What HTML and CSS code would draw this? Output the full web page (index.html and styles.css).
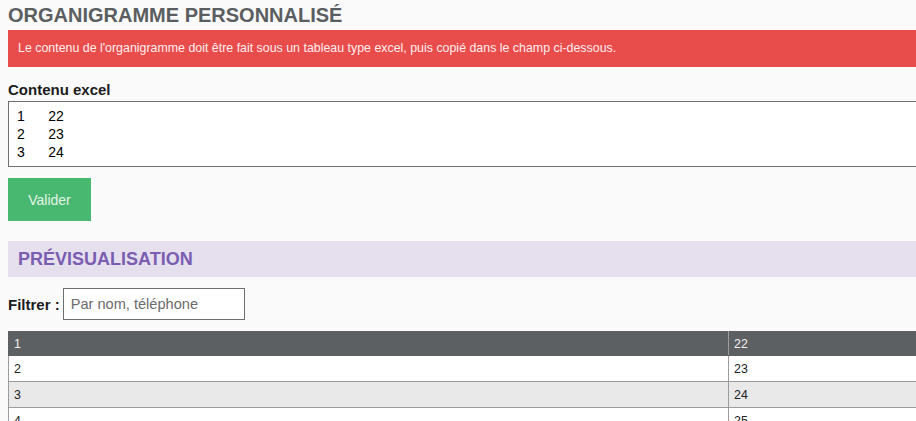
FILE: index.html
```html
<!DOCTYPE html>
<html lang="fr">
<head>
    <meta charset="UTF-8">
    <meta name="viewport" content="width=device-width, initial-scale=1.0">
    <title>Organigramme personnalisé</title>
    <link rel="stylesheet" href="styles.css">
</head>
<body>

    <div class="page">
        <h1 class="page-title">ORGANIGRAMME PERSONNALISÉ</h1>
        <div class="alert">Le contenu de l'organigramme doit être fait sous un tableau type excel, puis copié dans le champ ci-dessous.</div>

        <label class="field-label" for="excel">Contenu excel</label>
        <textarea id="excel" class="excel-input">1	22
2	23
3	24</textarea>

        <button class="btn-valider">Valider</button>

        <h2 class="section-title">PRÉVISUALISATION</h2>

        <div class="filter">
            <label for="filtre">Filtrer :</label>
            <input type="text" id="filtre" placeholder="Par nom, téléphone">
        </div>

        <table class="preview">
            <thead>
                <tr><th>1</th><th>22</th></tr>
            </thead>
            <tbody>
                <tr><td>2</td><td>23</td></tr>
                <tr><td>3</td><td>24</td></tr>
                <tr><td>4</td><td>25</td></tr>
            </tbody>
        </table>
    </div>

</body>
</html>
```

FILE: styles.css
```css
/* General Styles */
html, body {
    overflow: hidden;
}

body {
    font-family: 'Liberation Sans', Arial, sans-serif;
    background-color: #fafafa;
    margin: 0;
    padding: 0 8px;
}

.page {
    width: 960px;
}

.page-title {
    margin: 2px 0 0;
    font-size: 20px;
    line-height: 26px;
    color: #5a5e61;
}

.alert {
    margin-top: 2px;
    padding: 10px;
    background: #e84c4b;
    color: #fdeeee;
    font-size: 12.4px;
    line-height: 17px;
}

.field-label {
    display: block;
    margin-top: 15px;
    font-size: 15px;
    font-weight: bold;
    line-height: 16px;
    color: #1c1c1c;
}

.excel-input {
    display: block;
    box-sizing: border-box;
    width: 100%;
    height: 66px;
    margin-top: 3px;
    padding: 5px 8px;
    border: 1px solid #6d7073;
    background: #fff;
    font-family: 'Liberation Sans', Arial, sans-serif;
    font-size: 14px;
    line-height: 18px;
    color: #000;
    resize: none;
    tab-size: 8;
}

.btn-valider {
    display: block;
    height: 43px;
    width: 83px;
    margin-top: 11px;
    border: none;
    background: #48b76f;
    color: #e3f4e8;
    font-family: 'Liberation Sans', Arial, sans-serif;
    font-size: 14px;
    cursor: pointer;
}

.section-title {
    margin: 20px 0 0;
    height: 36px;
    padding: 0 10px;
    background: #e6e0ee;
    color: #7a5db1;
    font-size: 18px;
    line-height: 36px;
}

.filter {
    display: flex;
    align-items: center;
    gap: 3px;
    margin-top: 11px;
    font-size: 15px;
    font-weight: bold;
    color: #1c1c1c;
}

.filter input {
    box-sizing: border-box;
    width: 182px;
    height: 32px;
    padding: 0 7px;
    border: 1px solid #6d7073;
    background: #fff;
    font-family: 'Liberation Sans', Arial, sans-serif;
    font-size: 14.6px;
}

.filter input::placeholder {
    color: #6b6b6b;
}

.preview {
    width: 100%;
    margin-top: 11px;
    border-collapse: collapse;
    font-size: 12.4px;
}

.preview th,
.preview td {
    height: 25px;
    padding: 0 5px;
    text-align: left;
    font-weight: normal;
    border: 1px solid #9a9c9d;
}

.preview th:first-child,
.preview td:first-child {
    width: 709px;
}

.preview th {
    height: 23px;
    background: #5d6062;
    color: #f2f2f2;
    border-color: #5d6062;
    border-right-color: #9a9c9d;
}

.preview tbody tr {
    background: #fff;
    color: #222;
}

.preview tbody tr:nth-child(even) {
    background: #e8e9e8;
}
```
